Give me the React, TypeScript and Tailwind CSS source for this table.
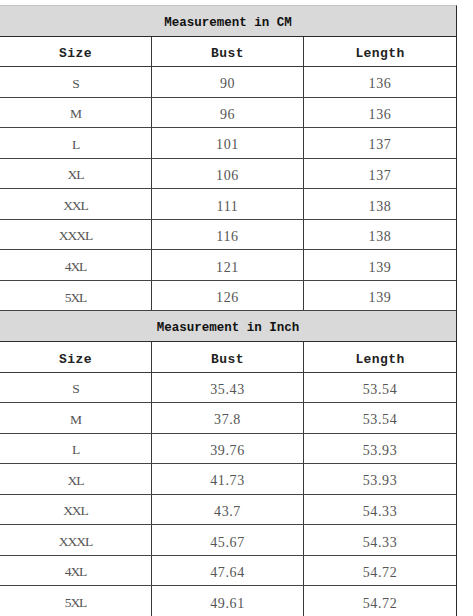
const cm = [
  ['S', '90', '136'],
  ['M', '96', '136'],
  ['L', '101', '137'],
  ['XL', '106', '137'],
  ['XXL', '111', '138'],
  ['XXXL', '116', '138'],
  ['4XL', '121', '139'],
  ['5XL', '126', '139'],
]

const inch = [
  ['S', '35.43', '53.54'],
  ['M', '37.8', '53.54'],
  ['L', '39.76', '53.93'],
  ['XL', '41.73', '53.93'],
  ['XXL', '43.7', '54.33'],
  ['XXXL', '45.67', '54.33'],
  ['4XL', '47.64', '54.72'],
  ['5XL', '49.61', '54.72'],
]

const mono = { fontFamily: '"Liberation Mono", "DejaVu Sans Mono", monospace' }
const serif = { fontFamily: '"Liberation Serif", "DejaVu Serif", serif' }

function Section({ title, rows }: { title: string; rows: string[][] }) {
  return (
    <div>
      <div className="flex h-[30.55px] items-center justify-center border-b border-[#2a2a2a] bg-[#d9d9d9] pt-[5px]">
        <span className="text-[12.5px] font-bold text-[#111]">{title}</span>
      </div>
      <div className="grid h-[30.55px] grid-cols-[151px_152px_1fr] border-b border-[#3a3a3a] text-[13px] font-bold tracking-[0.4px] text-[#222]">
        <div className="flex items-center justify-center pt-[5px]">Size</div>
        <div className="flex items-center justify-center border-l border-[#3a3a3a] pt-[5px]">Bust</div>
        <div className="flex items-center justify-center border-l border-[#3a3a3a] pt-[5px]">Length</div>
      </div>
      {rows.map((r) => (
        <div
          key={r[0]}
          className="grid h-[30.55px] grid-cols-[151px_152px_1fr] border-b border-[#444] text-[#555]"
          style={serif}
        >
          <div className="flex items-center justify-center pt-[4px] text-[13.5px] tracking-[-1px]">{r[0]}</div>
          <div className="flex items-center justify-center border-l border-[#3a3a3a] pt-[4px] text-[14px] tracking-[0.6px]">
            {r[1]}
          </div>
          <div className="flex items-center justify-center border-l border-[#3a3a3a] pt-[4px] text-[14px] tracking-[0.6px]">
            {r[2]}
          </div>
        </div>
      ))}
    </div>
  )
}

export default function App() {
  return (
    <div className="h-[616px] w-[473px] overflow-hidden bg-white pt-[5px]" style={mono}>
      <div className="w-[457px] border-t border-r border-t-[#c4c4c4] border-r-[#2a2a2a]">
        <Section title="Measurement in CM" rows={cm} />
        <Section title="Measurement in Inch" rows={inch} />
      </div>
    </div>
  )
}
